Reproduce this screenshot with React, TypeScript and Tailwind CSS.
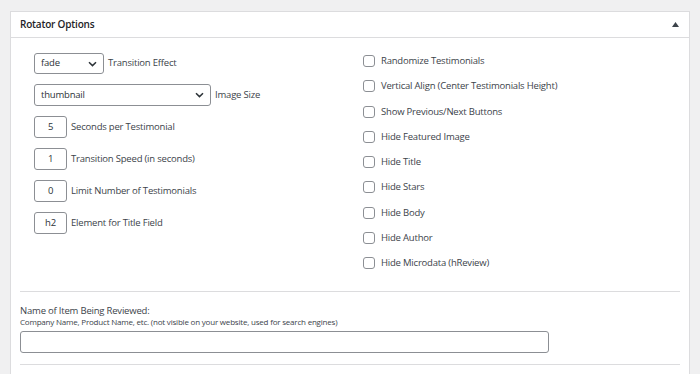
import React from "react";

function Chevron() {
  return (
    <svg width="9" height="6" viewBox="0 0 9 6" className="shrink-0">
      <path d="M1 1.2L4.5 4.6L8 1.2" fill="none" stroke="#2c3338" strokeWidth="1.5" />
    </svg>
  );
}

function SelectBox({ value, w }: { value: string; w: string }) {
  return (
    <div
      className={`${w} flex items-center justify-between rounded-[3px] border border-[#8c8f94] bg-white pl-[6px] pr-[6px] text-[9.5px] text-[#2c3338]`}
    >
      <span>{value}</span>
      <Chevron />
    </div>
  );
}

function NumBox({ value }: { value: string }) {
  return (
    <div className="flex h-[22px] w-[33px] shrink-0 items-center justify-center rounded-[3px] border border-[#8c8f94] bg-white text-[9.5px] text-[#2c3338]">
      {value}
    </div>
  );
}

const leftRows: { value: string; label: string }[] = [
  { value: "5", label: "Seconds per Testimonial" },
  { value: "1", label: "Transition Speed (in seconds)" },
  { value: "0", label: "Limit Number of Testimonials" },
  { value: "h2", label: "Element for Title Field" },
];

const checks = [
  "Randomize Testimonials",
  "Vertical Align (Center Testimonials Height)",
  "Show Previous/Next Buttons",
  "Hide Featured Image",
  "Hide Title",
  "Hide Stars",
  "Hide Body",
  "Hide Author",
  "Hide Microdata (hReview)",
];

export default function App() {
  return (
    <div className="min-h-[374px] bg-[#f0f0f1] px-[10px] pt-[11px] font-['Open_Sans',sans-serif] text-[#3c434a] tracking-[-0.2px]">
      <div className="border border-[#dcdcde] bg-white pb-10">
        <div className="flex h-[26px] items-center justify-between border-b border-[#dcdcde] pl-[9px] pr-[10px]">
          <span className="text-[10px] font-semibold text-[#1d2327]">Rotator Options</span>
          <svg width="7" height="5" viewBox="0 0 7 5">
            <polygon points="0,5 3.5,0 7,5" fill="#3c434a" />
          </svg>
        </div>

        <div className="flex items-start">
          <div className="ml-[23px] flex w-[329px] flex-col gap-[10px] pt-[15px]">
            <div className="flex items-center gap-[4px]">
              <SelectBox value="fade" w="w-[70px] h-[21px]" />
              <span className="text-[9.5px]">Transition Effect</span>
            </div>
            <div className="flex items-center gap-[4px]">
              <SelectBox value="thumbnail" w="w-[177px] h-[22px]" />
              <span className="text-[9.5px]">Image Size</span>
            </div>
            {leftRows.map((r) => (
              <div key={r.label} className="flex items-center gap-[4px]">
                <NumBox value={r.value} />
                <span className="text-[9.5px]">{r.label}</span>
              </div>
            ))}
          </div>

          <div className="flex flex-col pt-[10.5px]">
            {checks.map((c) => (
              <div key={c} className="flex h-[25.25px] items-center gap-[6px]">
                <div className="h-[12px] w-[12px] rounded-[3px] border border-[#8c8f94] bg-white" />
                <span className="text-[9.5px]">{c}</span>
              </div>
            ))}
          </div>
        </div>

        <div className="mx-[9px] mt-[15px] border-t border-[#dcdcde]" />

        <div className="mx-[9px] mt-[12px]">
          <div className="text-[9.5px] leading-[13px]">Name of Item Being Reviewed:</div>
          <div className="text-[8px] leading-[10px]">
            Company Name, Product Name, etc. (not visible on your website, used for search engines)
          </div>
          <div className="mt-[4.5px] h-[22px] w-[529px] rounded-[3px] border border-[#8c8f94] bg-white" />
        </div>

        <div className="mx-[9px] mt-[11px] border-t border-[#dcdcde]" />
      </div>
    </div>
  );
}
